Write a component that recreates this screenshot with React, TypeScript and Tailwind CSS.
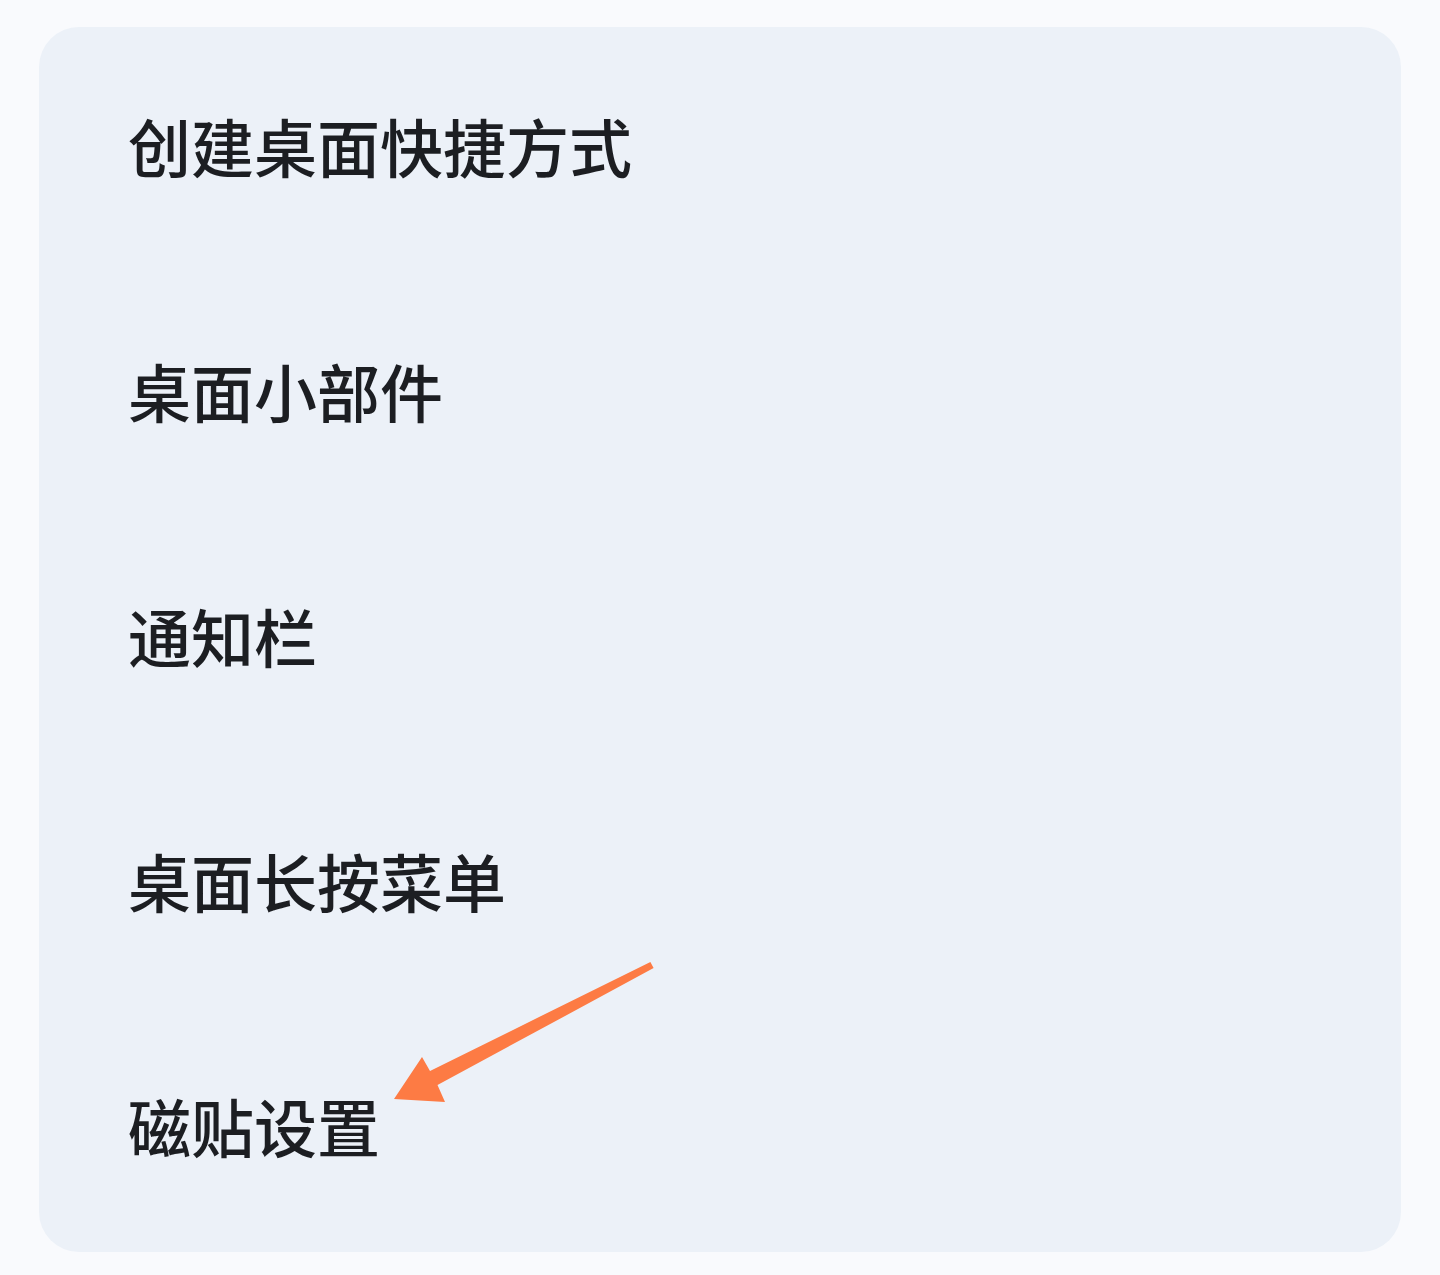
import React from 'react';

const items = ['创建桌面快捷方式', '桌面小部件', '通知栏', '桌面长按菜单', '磁贴设置'];

// Tapered orange arrow pointing at the last row
function Arrow() {
  return (
    <svg className="absolute left-0 top-0 pointer-events-none" width="1440" height="1275" viewBox="0 0 1440 1275">
      <polygon
        fill="#fd7b44"
        points="650.4,961.9 653.6,968.1 437.5,1085 445,1102 394,1099 422,1057 430,1071"
      />
    </svg>
  );
}

export default function App() {
  return (
    <div
      className="relative w-[1440px] h-[1275px] bg-[#f9fafd] pt-[27px]"
      style={{ fontFamily: '"Noto Sans CJK SC", "Noto Sans", sans-serif' }}
    >
      <div className="mx-[39px] rounded-[40px] bg-[#ecf1f8] flex flex-col">
        {items.map((t) => (
          <div
            key={t}
            className="h-[245px] flex items-center pl-[89px] pb-[10px] text-[63px] font-medium leading-none text-[#1c1e22]"
          >
            {t}
          </div>
        ))}
      </div>
      <Arrow />
    </div>
  );
}
